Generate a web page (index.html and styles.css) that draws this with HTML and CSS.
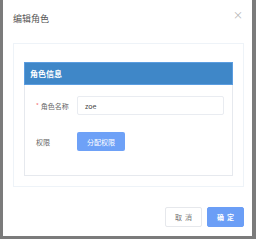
FILE: index.html
```html
<!DOCTYPE html>
<html>
<head>
<meta charset="utf-8">
<link rel="stylesheet" href="styles.css">
</head>
<body>
<div class="dialog">
  <div class="dialog-header">
    <span class="dialog-title">编辑角色</span>
    <span class="close">×</span>
  </div>
  <div class="card">
    <div class="panel">
      <div class="panel-head">角色信息</div>
      <div class="panel-body">
        <div class="row">
          <label class="label"><span class="req">*</span>角色名称</label>
          <div class="input">zoe</div>
        </div>
        <div class="row row-gap">
          <label class="label plain">权限</label>
          <button class="btn-assign">分配权限</button>
        </div>
      </div>
    </div>
  </div>
  <div class="footer">
    <button class="btn btn-cancel">取消</button>
    <button class="btn btn-ok">确定</button>
  </div>
</div>
</body>
</html>
```
FILE: styles.css
```css
html, body {
  margin: 0;
  padding: 0;
  background: #7b7b7b;
  width: 256px;
  height: 239px;
  overflow: hidden;
  font-family: "Noto Sans CJK SC", "Liberation Sans", sans-serif;
}
.dialog {
  margin-left: 3px;
  width: 249px;
  height: 236px;
  background: #fff;
  box-sizing: border-box;
  display: flex;
  flex-direction: column;
}
.dialog-header {
  height: 36px;
  display: flex;
  align-items: center;
  justify-content: space-between;
  padding: 0 9px 0 10px;
  box-sizing: border-box;
}
.dialog-title {
  font-size: 9px;
  color: #555;
  margin-top: 1px;
}
.close {
  font-size: 10px;
  color: #b5b5b5;
  line-height: 1;
  margin-top: -6px;
}
.card {
  margin: 7px 8px 0 10px;
  border: 1px solid #eef3f8;
  height: 144px;
  box-sizing: border-box;
  padding: 18px 10px 0 10px;
}
.panel {
  border: 1px solid #e6e9ee;
  border-top: none;
  height: 114px;
  box-sizing: border-box;
}
.panel-head {
  height: 23px;
  background: #3f87c8;
  color: #fff;
  font-size: 8px;
  font-weight: bold;
  display: flex;
  align-items: center;
  padding-left: 5px;
  margin: 0 -1px;
  border: 1px solid #5b9de0;
  box-sizing: border-box;
}
.panel-body {
  padding: 11px 0 0 11px;
}
.row {
  display: flex;
  align-items: center;
  height: 19px;
}
.row-gap {
  margin-top: 17px;
}
.label {
  width: 41px;
  font-size: 7px;
  color: #666;
  display: flex;
  align-items: center;
}
.req {
  color: #f56c6c;
  font-size: 6px;
  margin-right: 2px;
}
.input {
  width: 147px;
  height: 19px;
  box-sizing: border-box;
  border: 1px solid #e9ecf1;
  border-radius: 2px;
  font-size: 7px;
  color: #444;
  display: flex;
  align-items: center;
  padding-left: 7px;
}
.btn-assign {
  width: 48px;
  height: 19px;
  border: none;
  border-radius: 2px;
  background: #6ea1f7;
  color: #fff;
  font-family: inherit;
  font-size: 7px;
  padding: 0;
}
.footer {
  display: flex;
  justify-content: flex-end;
  gap: 5px;
  padding: 20px 8px 0 0;
}
.btn {
  width: 37px;
  height: 20px;
  border-radius: 2px;
  font-family: inherit;
  font-size: 7px;
  padding: 0;
  letter-spacing: 3px;
  text-indent: 3px;
}
.btn-cancel {
  background: #fff;
  border: 1px solid #e6e8ec;
  color: #777;
}
.btn-ok {
  background: #6b9ef6;
  border: 1px solid #6b9ef6;
  color: #fff;
  font-weight: bold;
}
```
